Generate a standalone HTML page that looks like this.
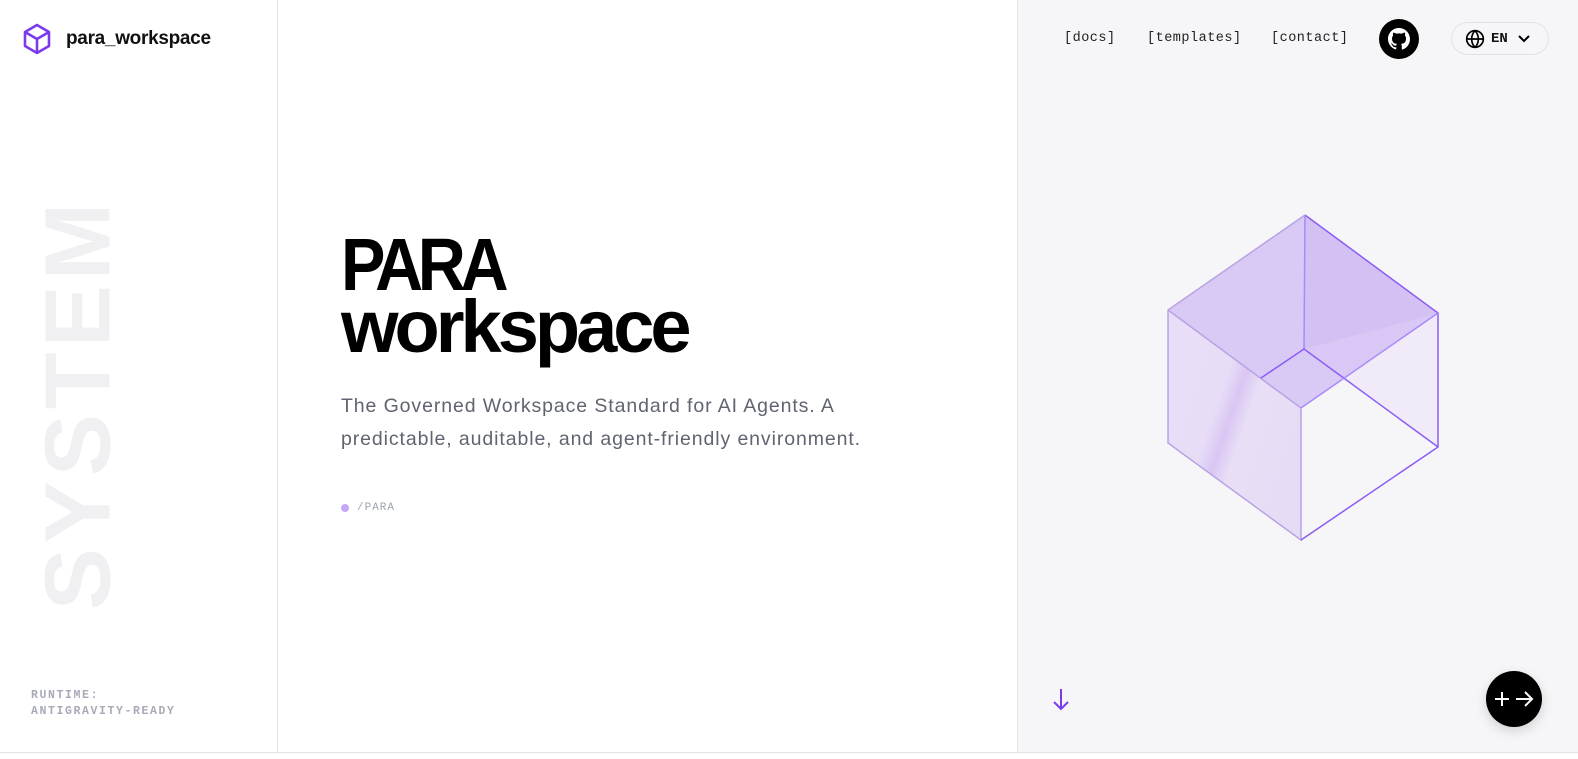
<!DOCTYPE html>
<html><head><meta charset="utf-8"><style>
*{margin:0;padding:0;box-sizing:border-box}
body{width:1578px;height:759px;overflow:hidden;background:#fff;font-family:"Liberation Sans",sans-serif;position:relative}
.left{position:absolute;left:0;top:0;width:278px;height:753px;border-right:1px solid #e4e4e7;border-bottom:1px solid #e4e4e7}
.mid{position:absolute;left:278px;top:0;width:740px;height:753px;border-right:1px solid #e4e4e7;border-bottom:1px solid #e4e4e7}
.right{position:absolute;left:1018px;top:0;width:560px;height:753px;background:#f6f6f8;border-bottom:1px solid #e4e4e7}
.logo{position:absolute;left:22px;top:23px;display:flex;align-items:center}
.logo span{margin-left:14px;font-weight:bold;font-size:19px;letter-spacing:-0.3px;color:#111}
.sys{position:absolute;left:78px;top:404px;transform:translate(-50%,-50%) rotate(-90deg);font-size:93px;font-weight:bold;color:#f0f0f2;letter-spacing:5px;white-space:nowrap}
.rt{position:absolute;left:31px;top:688px;font-family:"Liberation Mono",monospace;font-size:11.5px;letter-spacing:1.6px;color:#a8aab8;line-height:16px;font-weight:bold}
h1{position:absolute;left:341px;top:234px;font-size:74px;line-height:62px;letter-spacing:-4px;font-weight:bold;color:#000}
h1 .p{display:inline-block;transform:scaleX(0.9);transform-origin:left;letter-spacing:-6px}
.sub{position:absolute;left:341px;top:390px;font-size:19.5px;line-height:33px;color:#5f6470;width:540px;letter-spacing:0.9px}
.tag{position:absolute;left:341px;top:502px;font-family:"Liberation Mono",monospace;font-size:11px;color:#9ca3af;letter-spacing:1px;display:flex;align-items:center}
.tag i{width:8px;height:8px;border-radius:50%;background:#c4a7f5;margin-right:8px;display:inline-block}
.nav{position:absolute;top:31px;font-family:"Liberation Mono",monospace;font-size:13.5px;color:#222;letter-spacing:0.5px}
.gh{position:absolute;left:1379px;top:19px;width:40px;height:40px;border-radius:50%;background:#000;display:flex;align-items:center;justify-content:center}
.lang{position:absolute;left:1451px;top:22px;width:98px;height:33px;border:1px solid #e2e2e6;border-radius:17px;display:flex;align-items:center;padding-left:13px;font-family:"Liberation Mono",monospace;font-weight:bold;font-size:14px;color:#111}
.fab{position:absolute;left:1486px;top:671px;width:56px;height:56px;border-radius:50%;background:#000;box-shadow:0 4px 12px rgba(0,0,0,.15);display:flex;align-items:center;justify-content:center}
</style></head><body>
<div class="left"></div><div class="mid"></div><div class="right"></div>
<div class="logo"><svg width="30" height="32" viewBox="0 0 30 32" fill="none" stroke="#7c3aed" stroke-width="2.6" stroke-linejoin="round"><path d="M15 2 L27 9 V23 L15 30 L3 23 V9 Z"/><path d="M3 9 L15 16 L27 9 M15 16 V30"/></svg><span>para_workspace</span></div>
<div class="sys">SYSTEM</div>
<div class="rt">RUNTIME:<br>ANTIGRAVITY-READY</div>
<h1><span class="p">PARA</span><br>workspace</h1>
<div class="sub">The Governed Workspace Standard for AI Agents. A predictable, auditable, and agent-friendly environment.</div>
<div class="tag"><i></i>/PARA</div>
<div class="nav" style="left:1064px">[docs]</div>
<div class="nav" style="left:1147px">[templates]</div>
<div class="nav" style="left:1271px">[contact]</div>
<div class="gh"><svg width="22" height="22" viewBox="0 0 16 16" fill="#fff"><path d="M8 0C3.58 0 0 3.58 0 8c0 3.540 2.29 6.53 5.47 7.59.4.07.55-.17.55-.38v-1.33c-2.23.48-2.7-1.070-2.7-1.070-.36-.92-.89-1.17-.89-1.17-.73-.5.06-.49.06-.49.8.06 1.23.82 1.23.82.72 1.23 1.87.87 2.33.67.07-.52.28-.87.51-1.070-1.78-.2-3.64-.89-3.64-3.95 0-.87.31-1.59.82-2.15-.08-.2-.36-1.020.08-2.12 0 0 .67-.21 2.2.82a7.6 7.6 0 0 1 4 0c1.53-1.04 2.2-.82 2.2-.82.44 1.1.16 1.92.08 2.12.51.56.82 1.27.82 2.15 0 3.070-1.87 3.75-3.65 3.95.29.25.54.73.54 1.48v2.2c0 .21.15.46.55.38A8 8 0 0 0 16 8c0-4.42-3.58-8-8-8z"/></svg></div>
<div class="lang"><svg width="20" height="20" viewBox="0 0 24 24" fill="none" stroke="#000" stroke-width="2"><circle cx="12" cy="12" r="10"/><path d="M2 12h20M12 2c3 3 4 6.5 4 10s-1 7-4 10c-3-3-4-6.5-4-10s1-7 4-10z"/></svg><span style="margin-left:6px">EN</span><svg style="margin-left:10px" width="12" height="8" viewBox="0 0 12 8" fill="none" stroke="#000" stroke-width="2"><path d="M1 1l5 5 5-5"/></svg></div>
<svg style="position:absolute;left:0;top:0" width="1578" height="759">
<defs><linearGradient id="g" x1="0" y1="0" x2="1" y2="0.6"><stop offset="0" stop-color="#e9def8"/><stop offset="0.45" stop-color="#e7ddf7"/><stop offset="0.55" stop-color="#d9c6f3"/><stop offset="0.65" stop-color="#e8dff6"/><stop offset="1" stop-color="#e6dcf5"/></linearGradient></defs>
<polygon points="1305,215 1438,313 1438,447 1304,349" fill="#f1eaf8"/>
<polygon points="1168,310 1301,408 1301,540 1168,443" fill="url(#g)"/>
<polygon points="1305,215 1168,310 1301,408 1438,313" fill="#d7c6f4" opacity="0.95"/>
<polygon points="1305,215 1438,313 1304,349" fill="#d1bdf2" opacity="0.7"/>
<g fill="none" stroke-width="1.5">
<path d="M1305,215 L1168,310 L1168,443 L1301,540 L1301,408 L1168,310" stroke="#b9a2e4"/>
<path d="M1305,215 L1438,313 L1438,447 L1301,540" stroke="#8b5cf6"/>
<path d="M1305,215 L1304,349" stroke="#a78bfa"/>
<path d="M1261,378 L1304,349 L1438,447" stroke="#8b5cf6"/>
<path d="M1301,408 L1438,313" stroke="#a78bfa"/>
</g></svg>
<svg style="position:absolute;left:1052px;top:688px" width="18" height="24" viewBox="0 0 18 24" fill="none" stroke="#7c3aed" stroke-width="2"><path d="M9 1v20M2 14l7 7 7-7"/></svg>
<div class="fab"><svg width="40" height="20" viewBox="0 0 40 20" fill="none" stroke="#fff" stroke-width="2"><path d="M8 3v14M1 10h14M22 10h16M31 3l7 7-7 7"/></svg></div>
</body></html>
